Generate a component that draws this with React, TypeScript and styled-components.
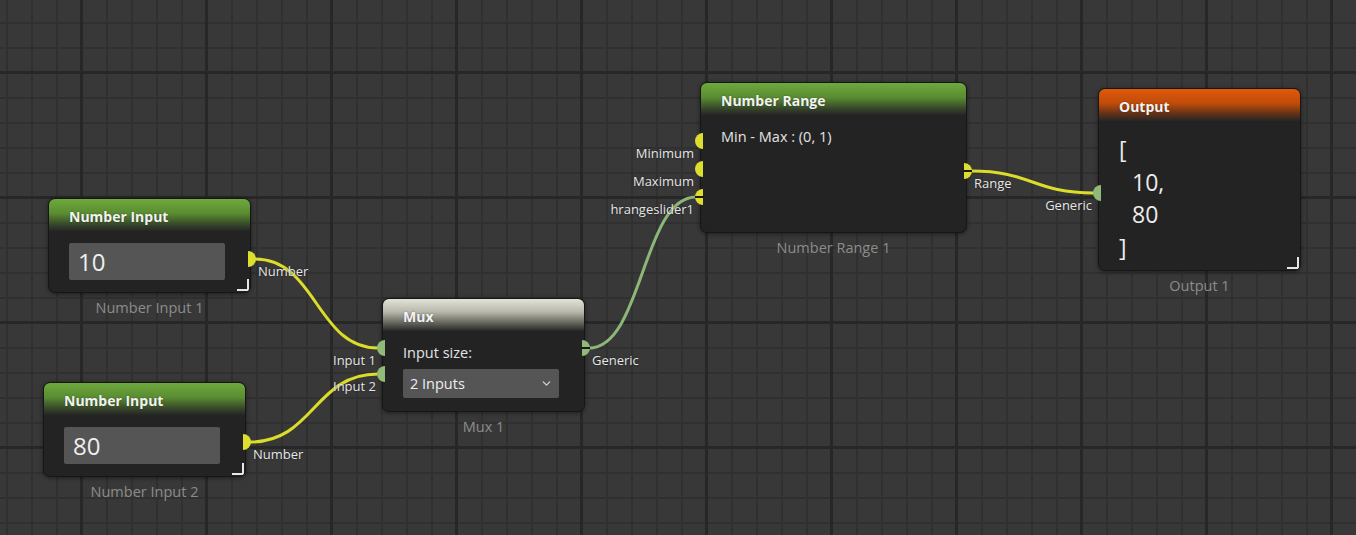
import React from 'react';
import styled, { createGlobalStyle } from 'styled-components';
import { ChevronDown } from 'lucide-react';

type Kind = 'green' | 'orange' | 'gray';
type Side = 'in' | 'out';
type PortColor = 'number' | 'generic';

interface PortDef {
    side: Side;
    cy: number;
    label: string;
    color: PortColor;
    stub?: boolean;
}

interface NodeDef {
    id: string;
    x: number;
    y: number;
    w: number;
    h: number;
    kind: Kind;
    title: string;
    caption: string;
    resizable?: boolean;
    ports: PortDef[];
}

const headerBg: Record<Kind, string> = {
    green: 'linear-gradient(180deg, #6ea93d 0%, #5a8c31 45%, #36462a 80%, #262626 100%)',
    orange: 'linear-gradient(180deg, #e0590b 0%, #c04b0a 45%, #5a3018 80%, #262626 100%)',
    gray: 'linear-gradient(180deg, #e2e2d6 0%, #b8b8ac 40%, #5c5c56 78%, #262626 100%)',
};

const portColors: Record<PortColor, string> = {
    number: '#dede2e',
    generic: '#8fba78',
};

const GlobalStyle = createGlobalStyle`
    html, body {
        margin: 0;
        padding: 0;
        background: #383838;
    }
    body {
        font-family: "Open Sans", "Noto Sans", sans-serif;
    }
`;

const Canvas = styled.div`
    position: relative;
    width: 1356px;
    height: 535px;
    overflow: hidden;
    background-color: #383838;
    background-image:
        linear-gradient(90deg, #272727 3px, transparent 3px),
        linear-gradient(180deg, #272727 3px, transparent 3px),
        linear-gradient(90deg, #303030 2px, transparent 2px),
        linear-gradient(180deg, #303030 2px, transparent 2px);
    background-size: 125px 125px, 125px 125px, 25px 25px, 25px 25px;
    background-position: 80px 0, 0 71px, 6px 0, 0 22px;
`;

const Wires = styled.svg`
    position: absolute;
    left: 0;
    top: 0;
    pointer-events: none;
`;

const NodeWrap = styled.div<{ $x: number; $y: number; $w: number }>`
    position: absolute;
    left: ${(p) => p.$x}px;
    top: ${(p) => p.$y}px;
    width: ${(p) => p.$w}px;
    display: flex;
    flex-direction: column;
`;

const Card = styled.div<{ $h: number }>`
    position: relative;
    height: ${(p) => p.$h}px;
    background: #232323;
    border: 1px solid #161616;
    border-radius: 7px;
    box-shadow: 0 1px 4px rgba(0, 0, 0, 0.45);
    overflow: hidden;
    box-sizing: border-box;
`;

const Header = styled.div<{ $kind: Kind }>`
    height: 32px;
    padding: 3px 0 0 20px;
    box-sizing: border-box;
    display: flex;
    align-items: center;
    background: ${(p) => headerBg[p.$kind]};
    color: #f2f2f2;
    font-size: 14px;
    font-weight: 700;
    text-shadow: 0 0 2px rgba(0, 0, 0, 0.35);
`;

const Body = styled.div`
    padding: 12px 20px;
    color: #e4e4e4;
    font-size: 14.5px;
    line-height: 20px;
`;

const Corner = styled.div`
    position: absolute;
    right: 1px;
    bottom: 1px;
    width: 12px;
    height: 12px;
    border-right: 2px solid #e6e6e6;
    border-bottom: 2px solid #e6e6e6;
    box-sizing: border-box;
`;

const Caption = styled.div`
    margin-top: 6px;
    text-align: center;
    color: #8c8c8c;
    font-size: 14.5px;
    line-height: 18px;
`;

const ValueField = styled.div`
    height: 37px;
    width: 156px;
    background: #555555;
    border-radius: 2px;
    color: #eeeeee;
    font-size: 24px;
    line-height: 37px;
    padding-left: 9px;
    box-sizing: border-box;
`;

const FieldLabel = styled.div`
    margin-bottom: 6px;
`;

const SelectBox = styled.div`
    width: 156px;
    height: 29px;
    background: #555555;
    border-radius: 2px;
    display: flex;
    align-items: center;
    justify-content: space-between;
    padding: 0 6px 0 7px;
    box-sizing: border-box;
    color: #eeeeee;
    font-size: 14.5px;
`;

const OutputLines = styled.div`
    display: flex;
    flex-direction: column;
    font-size: 23px;
    line-height: 32.5px;
    color: #ececec;
`;

const OutputLine = styled.div<{ $indent?: boolean }>`
    padding-left: ${(p) => (p.$indent ? 13 : 0)}px;
`;

const PortDot = styled.div<{ $side: Side; $cy: number; $color: PortColor; $stub?: boolean }>`
    position: absolute;
    top: ${(p) => p.$cy - 8}px;
    ${(p) => (p.$side === 'in' ? 'left: -5px;' : 'right: -5px;')}
    width: 8px;
    height: 16px;
    background: ${(p) => portColors[p.$color]};
    border-radius: ${(p) => (p.$side === 'in' ? '100% 0 0 100% / 50% 0 0 50%' : '0 100% 100% 0 / 0 50% 50% 0')};
    z-index: 2;

    &::after {
        content: '';
        display: ${(p) => (p.$stub ? 'block' : 'none')};
        position: absolute;
        top: 7px;
        ${(p) => (p.$side === 'in' ? 'left: 0;' : 'right: 0;')}
        width: 9px;
        height: 2px;
        background: #1a1a1a;
    }
`;

const PortLabel = styled.div<{ $side: Side; $cy: number }>`
    position: absolute;
    top: ${(p) => p.$cy + 4}px;
    ${(p) => (p.$side === 'in' ? 'right: calc(100% + 6px);' : 'left: calc(100% + 7px);')}
    white-space: nowrap;
    color: #e6e6e6;
    font-size: 13px;
    line-height: 16px;
    text-shadow: 0 0 2px rgba(0, 0, 0, 0.5);
    z-index: 2;
`;

const nodes: NodeDef[] = [
    {
        id: 'ni1',
        x: 48,
        y: 198,
        w: 203,
        h: 95,
        kind: 'green',
        title: 'Number Input',
        caption: 'Number Input 1',
        resizable: true,
        ports: [{ side: 'out', cy: 61, label: 'Number', color: 'number' }],
    },
    {
        id: 'ni2',
        x: 43,
        y: 382,
        w: 203,
        h: 95,
        kind: 'green',
        title: 'Number Input',
        caption: 'Number Input 2',
        resizable: true,
        ports: [{ side: 'out', cy: 60, label: 'Number', color: 'number' }],
    },
    {
        id: 'mux',
        x: 382,
        y: 298,
        w: 203,
        h: 114,
        kind: 'gray',
        title: 'Mux',
        caption: 'Mux 1',
        ports: [
            { side: 'in', cy: 50, label: 'Input 1', color: 'generic' },
            { side: 'in', cy: 76, label: 'Input 2', color: 'generic' },
            { side: 'out', cy: 50, label: 'Generic', color: 'generic', stub: true },
        ],
    },
    {
        id: 'range',
        x: 700,
        y: 82,
        w: 267,
        h: 151,
        kind: 'green',
        title: 'Number Range',
        caption: 'Number Range 1',
        ports: [
            { side: 'in', cy: 59, label: 'Minimum', color: 'number' },
            { side: 'in', cy: 87, label: 'Maximum', color: 'number' },
            { side: 'in', cy: 115, label: 'hrangeslider1', color: 'number', stub: true },
            { side: 'out', cy: 89, label: 'Range', color: 'number', stub: true },
        ],
    },
    {
        id: 'out',
        x: 1098,
        y: 88,
        w: 203,
        h: 183,
        kind: 'orange',
        title: 'Output',
        caption: 'Output 1',
        resizable: true,
        ports: [{ side: 'in', cy: 105, label: 'Generic', color: 'generic' }],
    },
];

function portPoint(id: string, index: number) {
    const n = nodes.find((node) => node.id === id)!;
    const p = n.ports[index];
    const x = p.side === 'in' ? n.x - 4 : n.x + n.w + 4;
    return { x, y: n.y + p.cy };
}

const links: { from: [string, number]; to: [string, number]; color: PortColor }[] = [
    { from: ['ni1', 0], to: ['mux', 0], color: 'number' },
    { from: ['ni2', 0], to: ['mux', 1], color: 'number' },
    { from: ['mux', 2], to: ['range', 2], color: 'generic' },
    { from: ['range', 3], to: ['out', 0], color: 'number' },
];

function wirePath(a: { x: number; y: number }, b: { x: number; y: number }) {
    const dx = Math.max(40, (b.x - a.x) * 0.5);
    return `M${a.x},${a.y} C${a.x + dx},${a.y} ${b.x - dx},${b.y} ${b.x},${b.y}`;
}

function NodeContent({ id }: { id: string }) {
    if (id === 'ni1') return <ValueField>10</ValueField>;
    if (id === 'ni2') return <ValueField>80</ValueField>;
    if (id === 'mux')
        return (
            <>
                <FieldLabel>Input size:</FieldLabel>
                <SelectBox>
                    <span>2 Inputs</span>
                    <ChevronDown size={13} strokeWidth={2.6} color='#cfcfcf' />
                </SelectBox>
            </>
        );
    if (id === 'range') return <div>Min - Max : (0, 1)</div>;
    return (
        <OutputLines>
            <OutputLine>[</OutputLine>
            <OutputLine $indent>10,</OutputLine>
            <OutputLine $indent>80</OutputLine>
            <OutputLine>]</OutputLine>
        </OutputLines>
    );
}

function GraphNode({ node }: { node: NodeDef }) {
    return (
        <NodeWrap $x={node.x} $y={node.y} $w={node.w}>
            <Card $h={node.h}>
                <Header $kind={node.kind}>{node.title}</Header>
                <Body>
                    <NodeContent id={node.id} />
                </Body>
                {node.resizable && <Corner />}
            </Card>
            <Caption>{node.caption}</Caption>
            {node.ports.map((p) => (
                <React.Fragment key={p.label + p.side}>
                    <PortDot $side={p.side} $cy={p.cy} $color={p.color} $stub={p.stub} />
                    <PortLabel $side={p.side} $cy={p.cy}>
                        {p.label}
                    </PortLabel>
                </React.Fragment>
            ))}
        </NodeWrap>
    );
}

export default function App() {
    return (
        <>
            <GlobalStyle />
            <Canvas>
                <Wires width={1356} height={535}>
                    {links.map((l, i) => (
                        <path
                            key={i}
                            d={wirePath(portPoint(...l.from), portPoint(...l.to))}
                            stroke={l.color === 'number' ? '#dcdc2a' : '#8db679'}
                            strokeWidth={3}
                            fill='none'
                            strokeLinecap='round'
                        />
                    ))}
                </Wires>
                {nodes.map((n) => (
                    <GraphNode key={n.id} node={n} />
                ))}
            </Canvas>
        </>
    );
}
